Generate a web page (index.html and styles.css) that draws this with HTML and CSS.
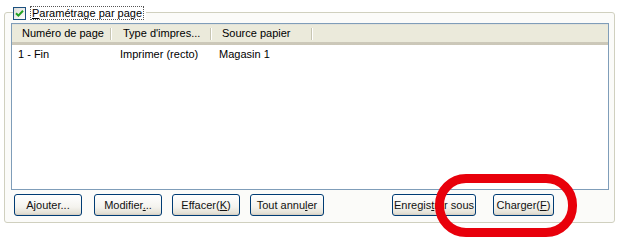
FILE: index.html
```html
<!DOCTYPE html>
<html lang="fr">
<head>
<meta charset="utf-8">
<link rel="stylesheet" href="styles.css">
</head>
<body>
<div class="group">
  <div class="legend">
    <span class="check">
      <svg width="9" height="9" viewBox="0 0 9 9"><path d="M1 4.2 L3.4 6.6 L8 1.8" fill="none" stroke="#21a121" stroke-width="2"/></svg>
    </span>
    <span class="legend-label"><u>P</u>aramétrage par page</span>
  </div>
  <div class="list">
    <div class="header">
      <div class="hcell c1">Numéro de page</div>
      <div class="hcell c2">Type d'impres...</div>
      <div class="hcell c3">Source papier</div>
      <div class="hrest"></div>
    </div>
    <div class="row">
      <div class="cell c1">1 - Fin</div>
      <div class="cell c2">Imprimer (recto)</div>
      <div class="cell c3">Magasin 1</div>
    </div>
  </div>
  <div class="buttons">
    <button class="btn w-ajouter">Ajouter...</button>
    <button class="btn w-modifier">Modifier<u>.</u>..</button>
    <button class="btn w-effacer">Effacer(<u>K</u>)</button>
    <button class="btn w-tout">Tout annu<u>l</u>er</button>
    <button class="btn w-enreg">Enregis<u>t</u>rer sous</button>
    <button class="btn w-charger">Charger(<u>F</u>)</button>
  </div>
</div>
<div class="annot"></div>
</body>
</html>
```

FILE: styles.css
```css
html, body {
  margin: 0;
  padding: 0;
  background: #ffffff;
}
body {
  width: 620px;
  height: 240px;
  position: relative;
  overflow: hidden;
  font-family: "Liberation Sans", Arial, sans-serif;
  font-size: 11px;
  color: #000;
}
.group {
  margin: 12px 0 0 4px;
  height: 209px;
  border: 1px solid #d0d0bf;
  border-radius: 3px;
  background: #fbfbf9;
  display: flex;
  flex-direction: column;
  padding: 0 5px 0 6px;
  box-sizing: content-box;
  width: 598px;
}
.legend {
  display: flex;
  align-items: center;
  height: 14px;
  margin: -7px 0 0 2px;
  align-self: flex-start;
  background: #ffffff;
  padding-right: 2px;
}
.check {
  width: 11px;
  height: 11px;
  border: 1px solid #1c5180;
  background: linear-gradient(135deg, #dcdcd7, #ffffff);
  display: flex;
  align-items: center;
  justify-content: center;
  box-sizing: content-box;
}
.legend-label {
  margin-left: 4px;
  padding: 0 1px;
  border: 1px dotted #555;
  line-height: 12px;
}
.list {
  margin-top: 3px;
  height: 165px;
  border: 1px solid #7f9db9;
  background: #ffffff;
}
.header {
  display: flex;
  height: 17px;
  background: #ebeadb;
  border-bottom: 3px solid;
  border-image: linear-gradient(#e2e2da, #d6d3c6 50%, #cbc7b8) 1;
  border-top: 1px solid #f4f4ee;
}
.hcell {
  line-height: 17px;
  box-sizing: border-box;
  padding-left: 10px;
  position: relative;
}
.hcell::after {
  content: "";
  position: absolute;
  right: 0;
  top: 3px;
  height: 12px;
  width: 1px;
  background: #c7c5b2;
  box-shadow: 1px 0 0 #ffffff;
}
.c1 { width: 99px; }
.c2 { width: 100px; padding-left: 12px; }
.c3 { width: 101px; padding-left: 11px; }
.hrest { flex: 1; }
.row {
  display: flex;
  height: 14px;
  margin-top: 2px;
}
.cell {
  line-height: 14px;
  box-sizing: border-box;
  padding-left: 6px;
}
.row .c2 { padding-left: 9px; }
.row .c3 { padding-left: 8px; }
.buttons {
  display: flex;
  margin-top: 4px;
  padding-left: 3px;
  gap: 10px;
}
.btn {
  height: 22px;
  box-sizing: border-box;
  border: 1px solid #003c74;
  border-radius: 3px;
  background: linear-gradient(#ffffff, #f4f3ee 60%, #e4e1d6 90%, #d6d0c5);
  font-family: "Liberation Sans", Arial, sans-serif;
  font-size: 11px;
  color: #111;
  padding: 0;
  box-shadow: inset 0 -1px 0 #d6d0c5;
}
.w-ajouter { width: 68px; margin-right: 2px; }
.w-modifier { width: 68px; }
.w-effacer { width: 68px; }
.w-tout { width: 74px; }
.w-enreg { width: 84px; margin-left: 58px; }
.w-charger { width: 61px; margin-left: 7px; }
.annot {
  position: absolute;
  left: 435px;
  top: 174px;
  width: 142px;
  height: 63px;
  box-sizing: border-box;
  border: 9px solid #e8000b;
  border-radius: 31px;
}
```
